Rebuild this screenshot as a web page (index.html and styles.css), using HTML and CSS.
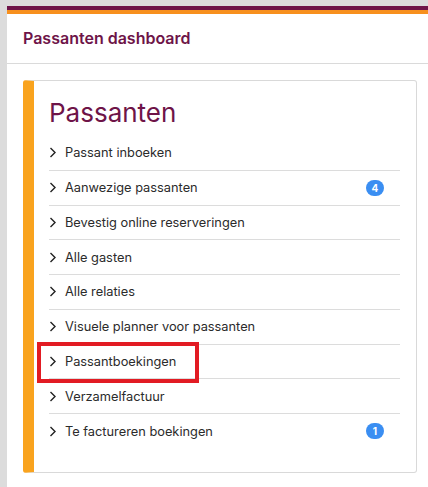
FILE: index.html
```html
<!DOCTYPE html>
<html lang="nl">
<head>
<meta charset="utf-8">
<link rel="stylesheet" href="styles.css">
</head>
<body>
<div class="panel">
  <div class="topbar"></div>
  <div class="header"><h1 class="header-title">Passanten dashboard</h1></div>
  <div class="content">
    <div class="card">
      <h2 class="card-title">Passanten</h2>
      <ul class="menu">
        <li class="item"><span class="chev"><svg width="8" height="11" viewBox="0 0 8 11"><path d="M1.5 1 L6 5.5 L1.5 10" fill="none" stroke="#222" stroke-width="1.4"/></svg></span><span class="label">Passant inboeken</span></li>
        <li class="item"><span class="chev"><svg width="8" height="11" viewBox="0 0 8 11"><path d="M1.5 1 L6 5.5 L1.5 10" fill="none" stroke="#222" stroke-width="1.4"/></svg></span><span class="label">Aanwezige passanten</span><span class="badge">4</span></li>
        <li class="item"><span class="chev"><svg width="8" height="11" viewBox="0 0 8 11"><path d="M1.5 1 L6 5.5 L1.5 10" fill="none" stroke="#222" stroke-width="1.4"/></svg></span><span class="label">Bevestig online reserveringen</span></li>
        <li class="item"><span class="chev"><svg width="8" height="11" viewBox="0 0 8 11"><path d="M1.5 1 L6 5.5 L1.5 10" fill="none" stroke="#222" stroke-width="1.4"/></svg></span><span class="label">Alle gasten</span></li>
        <li class="item"><span class="chev"><svg width="8" height="11" viewBox="0 0 8 11"><path d="M1.5 1 L6 5.5 L1.5 10" fill="none" stroke="#222" stroke-width="1.4"/></svg></span><span class="label">Alle relaties</span></li>
        <li class="item"><span class="chev"><svg width="8" height="11" viewBox="0 0 8 11"><path d="M1.5 1 L6 5.5 L1.5 10" fill="none" stroke="#222" stroke-width="1.4"/></svg></span><span class="label">Visuele planner voor passanten</span></li>
        <li class="item highlighted"><span class="chev"><svg width="8" height="11" viewBox="0 0 8 11"><path d="M1.5 1 L6 5.5 L1.5 10" fill="none" stroke="#222" stroke-width="1.4"/></svg></span><span class="label">Passantboekingen</span></li>
        <li class="item"><span class="chev"><svg width="8" height="11" viewBox="0 0 8 11"><path d="M1.5 1 L6 5.5 L1.5 10" fill="none" stroke="#222" stroke-width="1.4"/></svg></span><span class="label">Verzamelfactuur</span></li>
        <li class="item"><span class="chev"><svg width="8" height="11" viewBox="0 0 8 11"><path d="M1.5 1 L6 5.5 L1.5 10" fill="none" stroke="#222" stroke-width="1.4"/></svg></span><span class="label">Te factureren boekingen</span><span class="badge">1</span></li>
      </ul>
    </div>
  </div>
</div>
</body>
</html>
```

FILE: styles.css
```css
*, *::before, *::after { box-sizing: border-box; }
html, body { margin: 0; height: 100%; }
body {
  background: #dcdcdc;
  padding: 6px 0 0 7px;
  font-family: Inter, "Noto Sans", Arial, sans-serif;
  overflow: hidden;
}
.panel {
  background: #fff;
  min-height: 100%;
}
.topbar {
  height: 8px;
  border-top: 4px solid #6e1448;
  background: #f7901e;
}
.header {
  height: 50px;
  border-bottom: 1px solid #dadada;
  display: flex;
  align-items: center;
  padding: 0 16px;
}
.header-title {
  margin: 0;
  font-size: 16px;
  font-weight: 600;
  color: #6e1448;
  position: relative;
  top: -1px;
}
.content {
  padding: 16px 11px 0 16px;
}
.card {
  border: 1px solid #d9d9d9;
  border-left: 11px solid #f9a31e;
  border-radius: 3px;
  padding: 0 16px 23px 15px;
}
.card-title {
  margin: 0;
  padding-top: 15px;
  height: 55px;
  font-size: 26px;
  font-weight: 400;
  color: #6e1448;
  line-height: 33px;
}
.menu {
  list-style: none;
  margin: 0;
  padding: 0;
}
.item {
  display: flex;
  align-items: center;
  height: 34.75px;
  border-bottom: 1px solid #dcdcdc;
  font-size: 12.8px;
  color: #2b2b2b;
  position: relative;
}
.item:last-child { border-bottom: none; }
.chev {
  width: 16px;
  display: flex;
  align-items: center;
}
.chev svg { display: block; }
.label { flex: 1; }
.badge {
  background: #3a8ef2;
  color: #fff;
  font-size: 10px;
  font-weight: 700;
  min-width: 18px;
  height: 16px;
  border-radius: 8px;
  display: flex;
  align-items: center;
  justify-content: center;
  margin-right: 16px;
}
.highlighted::after {
  content: "";
  position: absolute;
  left: -12px;
  top: -3px;
  width: 162px;
  height: 41px;
  border: 4px solid #e21b23;
}
```
